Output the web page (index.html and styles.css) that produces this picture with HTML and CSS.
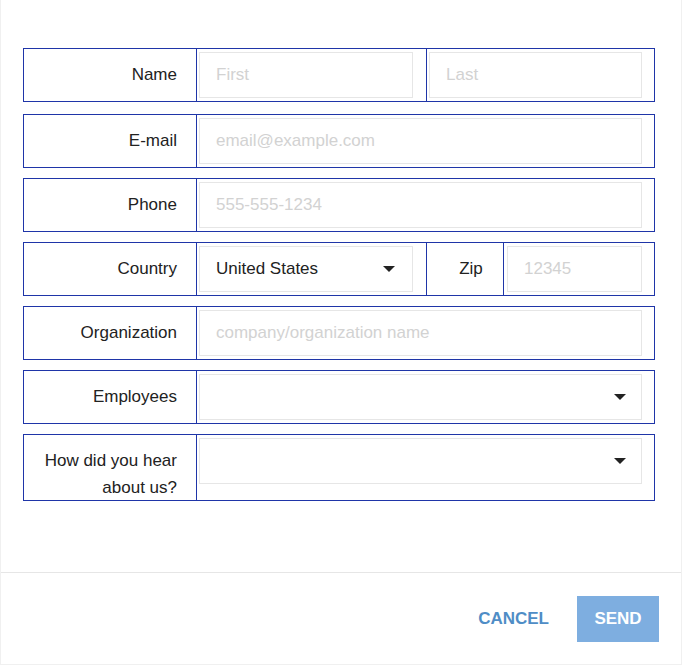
FILE: index.html
```html
<!DOCTYPE html>
<html lang="en">
<head>
    <meta charset="UTF-8">
    <meta name="viewport" content="width=device-width, initial-scale=1.0">
    <title>Contact</title>
    <link rel="stylesheet" href="styles.css">
</head>
<body>
    <div class="dialog">
        <form class="contact-form">
            <div class="row">
                <label class="row-label" for="first">Name</label>
                <div class="cell cell-split">
                    <input type="text" id="first" class="field" placeholder="First">
                </div>
                <div class="cell">
                    <input type="text" id="last" class="field" placeholder="Last">
                </div>
            </div>

            <div class="row">
                <label class="row-label" for="email">E-mail</label>
                <div class="cell">
                    <input type="text" id="email" class="field" placeholder="email@example.com">
                </div>
            </div>

            <div class="row">
                <label class="row-label" for="phone">Phone</label>
                <div class="cell">
                    <input type="text" id="phone" class="field" placeholder="555-555-1234">
                </div>
            </div>

            <div class="row row-country">
                <label class="row-label" for="country">Country</label>
                <div class="cell cell-split">
                    <div class="field select-field" id="country">
                        <span>United States</span>
                        <span class="caret"></span>
                    </div>
                </div>
                <label class="zip-label" for="zip">Zip</label>
                <div class="cell cell-zip">
                    <input type="text" id="zip" class="field" placeholder="12345">
                </div>
            </div>

            <div class="row">
                <label class="row-label" for="org">Organization</label>
                <div class="cell">
                    <input type="text" id="org" class="field" placeholder="company/organization name">
                </div>
            </div>

            <div class="row">
                <label class="row-label" for="employees">Employees</label>
                <div class="cell">
                    <div class="field select-field select-wide" id="employees">
                        <span></span>
                        <span class="caret"></span>
                    </div>
                </div>
            </div>

            <div class="row row-tall">
                <label class="row-label" for="source">How did you hear<br>about us?</label>
                <div class="cell">
                    <div class="field select-field select-wide" id="source">
                        <span></span>
                        <span class="caret"></span>
                    </div>
                </div>
            </div>
        </form>

        <div class="footer">
            <button type="button" class="btn btn-cancel">CANCEL</button>
            <button type="button" class="btn btn-send">SEND</button>
        </div>
    </div>
</body>
</html>
```

FILE: styles.css
```css
* {
    box-sizing: border-box;
}

body {
    margin: 0;
    font-family: "Liberation Sans", Arial, sans-serif;
    font-size: 17px;
    color: #222;
    background: #fff;
}

.dialog {
    width: 682px;
    height: 665px;
    border: 1px solid #f0f0f0;
    border-top: none;
    display: flex;
    flex-direction: column;
}

.contact-form {
    height: 572px;
    padding: 48px 0 0 22px;
    display: flex;
    flex-direction: column;
    gap: 10px;
}

.row {
    width: 632px;
    height: 54px;
    border: 1px solid #1f35a8;
    display: flex;
}

.row:first-child {
    margin-bottom: 2px;
}

.row-label {
    width: 173px;
    flex: none;
    border-right: 1px solid #1f35a8;
    display: flex;
    align-items: center;
    justify-content: flex-end;
    padding-right: 19px;
    text-align: right;
}

.cell {
    flex: 1;
    padding: 3px 12px 3px 2px;
}

.cell-split {
    flex: none;
    width: 230px;
    border-right: 1px solid #1f35a8;
    padding-right: 13px;
}

.zip-label {
    width: 77px;
    flex: none;
    border-right: 1px solid #1f35a8;
    display: flex;
    align-items: center;
    justify-content: center;
    padding-left: 12px;
}

.cell-zip {
    padding-left: 3px;
}

.field {
    width: 100%;
    height: 46px;
    border: 1px solid #e6e6e6;
    padding: 0 16px;
    font-family: inherit;
    font-size: 17px;
    color: #222;
    background: #fff;
    outline: none;
}

.field::placeholder {
    color: #d2d2d2;
}

/* fake select */
.select-field {
    display: flex;
    align-items: center;
    justify-content: space-between;
    padding-right: 17px;
}

.select-wide {
    padding-right: 15px;
}

.caret {
    width: 0;
    height: 0;
    border-left: 6px solid transparent;
    border-right: 6px solid transparent;
    border-top: 6px solid #222;
}

.row-tall {
    height: 67px;
}

.row-tall .row-label {
    align-items: flex-start;
    padding-top: 12px;
    line-height: 27px;
}

.row-tall .cell {
    padding-bottom: 0;
}

.footer {
    flex: 1;
    border-top: 1px solid #e6e6e6;
    display: flex;
    justify-content: flex-end;
    align-items: flex-start;
    padding: 23px 22px 0 0;
    gap: 12px;
}

.btn {
    height: 46px;
    border: none;
    font-family: inherit;
    font-size: 17px;
    font-weight: bold;
    cursor: pointer;
    background: none;
}

.btn-cancel {
    color: #4f8dc6;
    padding: 0 16px;
}

.btn-send {
    width: 82px;
    color: #fff;
    background-color: #7eaee0;
}
```
